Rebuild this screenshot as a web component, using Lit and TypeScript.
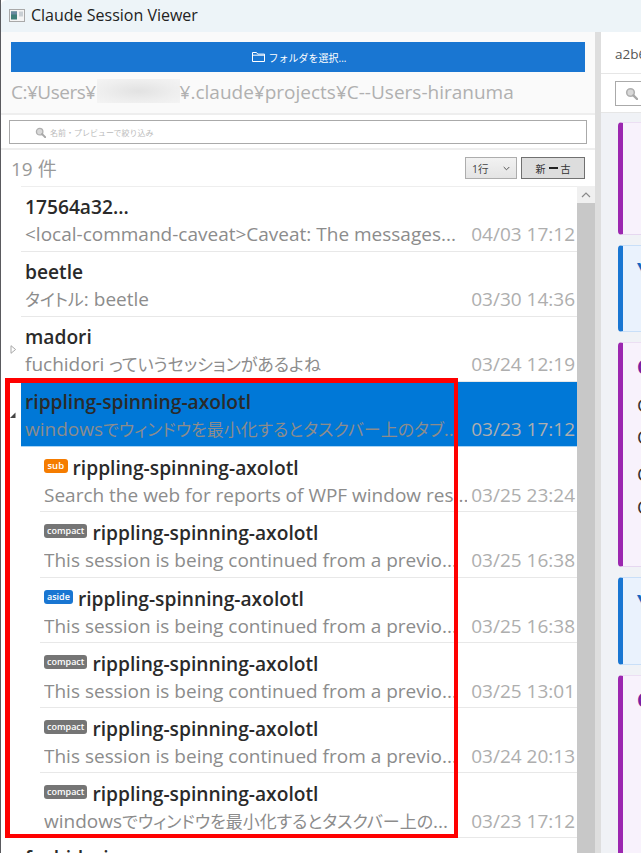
import { LitElement, html, css, svg } from "lit";
import { customElement } from "lit/decorators.js";

type Row = { title: string; preview: string; date: string; badge?: string; expander?: string; selected?: boolean; child?: boolean };

const rows: Row[] = [
  { title: "17564a32...", preview: "<local-command-caveat>Caveat: The messages...", date: "04/03 17:12" },
  { title: "beetle", preview: "タイトル: beetle", date: "03/30 14:36" },
  { title: "madori", preview: "fuchidori っていうセッションがあるよね", date: "03/24 12:19", expander: "closed" },
  { title: "rippling-spinning-axolotl", preview: "windowsでウィンドウを最小化するとタスクバー上のタブ..", date: "03/23 17:12", expander: "open", selected: true },
  { title: "rippling-spinning-axolotl", preview: "Search the web for reports of WPF window res...", date: "03/25 23:24", badge: "sub", child: true },
  { title: "rippling-spinning-axolotl", preview: "This session is being continued from a previo...", date: "03/25 16:38", badge: "compact", child: true },
  { title: "rippling-spinning-axolotl", preview: "This session is being continued from a previo...", date: "03/25 16:38", badge: "aside", child: true },
  { title: "rippling-spinning-axolotl", preview: "This session is being continued from a previo...", date: "03/25 13:01", badge: "compact", child: true },
  { title: "rippling-spinning-axolotl", preview: "This session is being continued from a previo...", date: "03/24 20:13", badge: "compact", child: true },
  { title: "rippling-spinning-axolotl", preview: "windowsでウィンドウを最小化するとタスクバー上の...", date: "03/23 17:12", badge: "compact", child: true },
  { title: "fuchidori", preview: "fuchidori", date: "03/22 10:00" },
];

const cards = [
  { kind: "c", h: 113, head: "", lines: [] as { t: string; m: number }[] },
  { kind: "u", h: 87, head: "You", lines: [] },
  { kind: "c", h: 225, head: "Claude", lines: [{ t: "Good", m: 18 }, { t: "Opening", m: 12 }, { t: "Checking", m: 17 }, { t: "Overall", m: 13 }] },
  { kind: "u", h: 88, head: "You", lines: [] },
  { kind: "c", h: 225, head: "Claude", lines: [] },
];

const lens = svg`<circle cx="5.5" cy="5.5" r="3.8" fill="#d8d8d8" stroke="#b0b0b0" stroke-width="1.6"/><path d="M8.4 8.4 12 12" stroke="#a8a8a8" stroke-width="2.4" stroke-linecap="round"/>`;

/* Japanese runs are set smaller than Latin, as in the reference's UI font. */
const runs = (text: string) =>
  text.split(/([\u3000-\u9fff]+)/).map((part, i) => (i % 2 ? html`<span class="cjk">${part}</span>` : part));

@customElement("app-root")
export class AppRoot extends LitElement {
  static styles = css`
    :host { display: block; width: 641px; height: 853px; overflow: hidden; background: #fff; font-family: "Open Sans", "Noto Sans CJK JP", sans-serif; position: relative; box-sizing: border-box; border-left: 1px solid #5a5a5e; }
    * { box-sizing: border-box; }
    .titlebar { height: 32px; background: #edf4f8; display: flex; align-items: center; padding: 0 0 2px 8px; gap: 6px; font-size: 16px; color: #222; border-top-left-radius: 6px; white-space: nowrap; }
    .app-icon { width: 16px; height: 13px; display: block; }
    .body { display: flex; height: 821px; }
    .left { width: 594px; display: flex; flex-direction: column; background: #fff; flex: none; }
    .head { background: #fafafa; height: 83px; padding: 10px 10px 0 10px; border-bottom: 2px solid #eee; flex: none; }
    .pick { height: 30px; background: #1976d2; color: #fff; font-size: 10px; display: flex; align-items: center; justify-content: center; gap: 4px; padding-left: 2px; }
    .path { margin-top: 7px; font-size: 19px; line-height: 26px; color: #b0b0b0; white-space: nowrap; display: flex; }
    .path-start { letter-spacing: -0.5px; }
    .blur { width: 83px; height: 24px; flex: none; margin-left: 1px; background: radial-gradient(ellipse at center, #e2e2e2 0%, #eeeeee 60%, #f4f4f4 100%); }
    .filter { height: 35px; flex: none; padding: 5px 8px 0 8px; border-bottom: 2px solid #eee; background: #fff; }
    .filter-box { height: 24px; border: 1px solid #aaa; display: flex; align-items: center; padding-left: 25px; gap: 4px; font-size: 8px; color: #bbb; background: #fff; }
    .toolbar { height: 36px; flex: none; display: flex; align-items: center; padding: 0 10px 0 10px; color: #999; font-size: 19px; }
    .count { flex: 1; }
    .select { width: 52px; height: 22px; border: 1px solid #adadad; background: linear-gradient(#f2f2f2, #e4e4e4); font-size: 10.5px; color: #444; display: flex; align-items: center; padding: 0 6px; justify-content: space-between; margin-right: 4px; }
    .sort { width: 64px; height: 22px; border: 1px solid #707070; background: #dddddd; font-size: 10px; color: #333; display: flex; align-items: center; justify-content: center; gap: 3px; }
    .sort b { display: block; width: 9px; height: 1.5px; background: #222; }
    .listwrap { flex: 1; display: flex; min-height: 0; overflow: hidden; }
    .gutter { width: 20px; flex: none; }
    .list { flex: 1; min-width: 0; border-top: 1px solid #eee; }
    .scroll { width: 18px; flex: none; display: flex; flex-direction: column; }
    .scroll-up { height: 17px; background: #f0f0f0; display: flex; align-items: center; justify-content: center; }
    .scroll-thumb { flex: 1; background: #c8c8c8; }
    .row { height: 65.1px; padding: 7px 2px 0 4px; border-bottom: 1px solid #e8e8e8; position: relative; }
    .row.child { margin-left: 19px; padding-left: 4px; padding-top: 8px; }
    .row.selected { background: #0078d7; border-bottom-color: #a9d4f5; }
    .exp { position: absolute; top: 28px; width: 7px; height: 9px; }
    .exp.closed { left: -11px; }
    .exp.open { left: -12px; }
    .title { height: 26px; line-height: 26px; font-size: 19.2px; font-weight: 600; color: #2a2a2a; display: flex; align-items: center; white-space: nowrap; gap: 5px; }
    .badge { font-size: 9.5px; line-height: 14px; height: 14px; padding: 0 3.5px; border-radius: 3px; color: #fff; font-weight: 600; margin-top: -4px; }
    .badge.sub { background: #f57c00; }
    .badge.compact { background: #757575; padding: 0 3px; font-size: 9px; }
    .badge.aside { background: #1976d2; padding: 0 3px; font-size: 9px; }
    .line2 { display: flex; line-height: 27px; font-size: 19px; margin-top: 1px; }
    .preview { flex: 1; min-width: 0; overflow: hidden; white-space: nowrap; color: #8c8c8c; }
    .cjk { font-size: 17px; font-feature-settings: "palt"; }
    .date { flex: none; margin-left: 4px; color: #aeaeae; }
    .split { width: 6px; background: #dedede; flex: none; }
    .right { flex: 1; min-width: 0; display: flex; flex-direction: column; background: #f0f2f6; overflow: hidden; }
    .rtop { height: 42px; background: #fff; border-bottom: 1px solid #e6e6e6; padding: 12px 0 0 14px; font-size: 13.5px; color: #555; line-height: 20px; white-space: nowrap; flex: none; }
    .rsearch { height: 39px; background: #fff; border-bottom: 1px solid #e6e6e6; padding: 7px 0 0 14px; flex: none; }
    .rbox { width: 60px; height: 25px; border: 1px solid #aaa; display: flex; align-items: center; padding-left: 9px; }
    .cards { padding: 9px 0 0 17px; display: flex; flex-direction: column; gap: 10px; width: 160px; }
    .card { flex: none; border-left: 5px solid; border-radius: 4px; padding: 14px 0 0 14px; font-size: 19px; line-height: 20px; white-space: nowrap; border-top: 1px solid; border-bottom: 1px solid; }
    .card.c { border-left-color: #9c27b0; background: #f8f2fc; border-top-color: #ecdff3; border-bottom-color: #e6d8f0; color: #333; }
    .card.u { border-left-color: #1976d2; background: #eaf2fd; border-top-color: #c9dff8; border-bottom-color: #c9dff8; color: #333; }
    .head-t { font-weight: 700; }
    .c .head-t { color: #7b1fa2; }
    .u .head-t { color: #1565c0; }
    .mark { position: absolute; left: 4px; top: 378px; width: 453px; height: 460px; border-style: solid; border-color: #ff0000; border-width: 5px 4px 4px 5px; pointer-events: none; }
  `;

  private renderRow(r: Row) {
    const cls = `row${r.child ? " child" : ""}${r.selected ? " selected" : ""}`;
    return html`<div class=${cls}>
      ${r.expander === "closed"
        ? html`<svg class="exp closed" viewBox="0 0 7 9"><path d="M1 .7 5.6 4.5 1 8.3Z" fill="#fff" stroke="#a8a8a8"/></svg>`
        : r.expander === "open"
        ? html`<svg class="exp open" viewBox="0 0 7 9"><path d="M6.5 2.5V8H1Z" fill="#444"/></svg>`
        : ""}
      <div class="title">
        ${r.badge ? html`<span class="badge ${r.badge}">${r.badge}</span>` : ""}
        <span>${r.title}</span>
      </div>
      <div class="line2"><span class="preview">${runs(r.preview)}</span><span class="date">${r.date}</span></div>
    </div>`;
  }

  render() {
    return html`
      <div class="titlebar">
        <svg class="app-icon" viewBox="0 0 16 13">
          <rect x=".5" y=".5" width="15" height="12" fill="#f4f4f4" stroke="#a9a9a9"/>
          <rect x="2" y="2.5" width="6" height="8" fill="#3f7f78"/>
          <rect x="2" y="2.5" width="6" height="3" fill="#6a8aa0"/>
          <rect x="10" y="2.5" width="4" height="5" fill="#c9cfd4"/>
        </svg>
        <span>Claude Session Viewer</span>
      </div>
      <div class="body">
        <div class="left">
          <div class="head">
            <div class="pick">
              <svg width="13" height="12" viewBox="0 0 13 12" fill="none" stroke="#fff" stroke-width="1"><path d="M.5 10.5V1.5h4l1.2 1.6h6.8v7.4Z"/><path d="M.5 4.2h12"/></svg>
              <span>フォルダを選択...</span>
            </div>
            <div class="path"><span class="path-start">C:¥Users¥</span><span class="blur"></span><span>¥.claude¥projects¥C--Users-hiranuma</span></div>
          </div>
          <div class="filter">
            <div class="filter-box">
              <svg width="11" height="11" viewBox="0 0 13 13">${lens}</svg>
              <span>名前・プレビューで絞り込み</span>
            </div>
          </div>
          <div class="toolbar">
            <span class="count">19 件</span>
            <div class="select"><span>1行</span><svg width="7" height="5" viewBox="0 0 7 5" fill="none" stroke="#555"><path d="M.7 1 3.5 3.8 6.3 1"/></svg></div>
            <div class="sort"><span>新</span><b></b><span>古</span></div>
          </div>
          <div class="listwrap">
            <div class="gutter"></div>
            <div class="list">${rows.map((r) => this.renderRow(r))}</div>
            <div class="scroll">
              <div class="scroll-up"><svg width="10" height="6" viewBox="0 0 10 6" fill="none" stroke="#8a8a8a" stroke-width="1.2"><path d="M1 5 5 1 9 5"/></svg></div>
              <div class="scroll-thumb"></div>
            </div>
          </div>
        </div>
        <div class="split"></div>
        <div class="right">
          <div class="rtop">a2b6c1d4</div>
          <div class="rsearch"><div class="rbox"><svg width="13" height="13" viewBox="0 0 13 13">${lens}</svg></div></div>
          <div class="cards">
            ${cards.map(
              (c) => html`<div class="card ${c.kind}" style="height:${c.h}px">
                <div class="head-t">${c.head}</div>
                ${c.lines.map((l) => html`<div style="margin-top:${l.m}px">${l.t}</div>`)}
              </div>`
            )}
          </div>
        </div>
      </div>
      <div class="mark"></div>
    `;
  }
}
